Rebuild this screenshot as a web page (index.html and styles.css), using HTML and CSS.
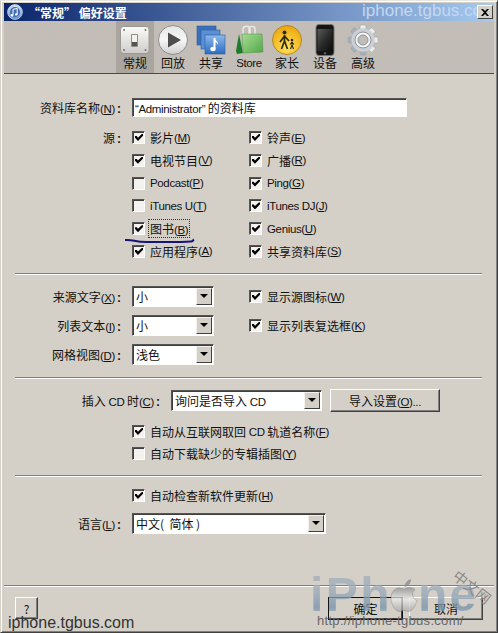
FILE: index.html
```html
<!DOCTYPE html>
<html lang="zh-CN">
  <head>
    <meta charset="UTF-8" />
    <title>“常规” 偏好设置</title>
    <link rel="stylesheet" href="styles.css">
  </head>
  <body>
    <div class="window">
      <header class="titlebar">
        <svg class="titlebar__icon" width="16" height="16" viewBox="0 0 16 16">
          <defs>
            <linearGradient id="disc" x1="0" y1="0" x2="0" y2="1">
              <stop offset="0" stop-color="#d8e4f4" />
              <stop offset="1" stop-color="#5f8fd0" />
            </linearGradient>
          </defs>
          <circle cx="8" cy="8" r="7.4" fill="url(#disc)" stroke="#c8d4e4" stroke-width="0.8" />
          <circle cx="8" cy="8" r="5" fill="#3f6cb4" />
          <path d="M6 5.4l4.2-1v6" fill="none" stroke="#fff" stroke-width="1" />
          <path d="M6 5.4v5.8" fill="none" stroke="#fff" stroke-width="1" />
          <circle cx="5" cy="11.2" r="1.2" fill="#fff" />
          <circle cx="9.2" cy="10.4" r="1.2" fill="#fff" />
        </svg>
        <h1 class="titlebar__text">“常规” 偏好设置</h1>
        <span class="titlebar__mark">iphone.tgbus.com</span>
        <button class="titlebar__close" type="button" aria-label="关闭">
          <svg width="8" height="7" viewBox="0 0 8 7">
            <path d="M0 0h2l2 2 2-2h2L5 3.500l3 3.500H6L4 5 2 7H0l3-3.500z" fill="#000" />
          </svg>
        </button>
      </header>

      <nav class="toolbar">
        <a class="tool tool--active">
          <svg width="30" height="30" viewBox="0 0 30 30">
            <defs>
              <linearGradient id="tile" x1="0" y1="0" x2="0" y2="1">
                <stop offset="0" stop-color="#fbfbfa" />
                <stop offset="1" stop-color="#cfcdc9" />
              </linearGradient>
            </defs>
            <rect x="0.500" y="1.500" width="28.500" height="27" rx="3" fill="url(#tile)" stroke="#9a9893" />
            <rect x="11" y="9" width="7" height="13" rx="1" fill="#8f8c87" />
            <rect x="12" y="10" width="5" height="7" fill="#f2f1ee" />
            <rect x="12" y="17" width="5" height="4" fill="#55534f" />
            <g fill="#77756f">
              <circle cx="4" cy="5" r="1" />
              <circle cx="25.500" cy="5" r="1" />
              <circle cx="4" cy="25" r="1" />
              <circle cx="25.500" cy="25" r="1" />
            </g>
          </svg>
          <span>常规</span>
        </a>
        <a class="tool">
          <svg width="30" height="30" viewBox="0 0 30 30">
            <defs>
              <linearGradient id="play" x1="0" y1="0" x2="0" y2="1">
                <stop offset="0" stop-color="#e6e6e6" />
                <stop offset="0.500" stop-color="#f6f6f6" />
                <stop offset="1" stop-color="#cfcfcf" />
              </linearGradient>
            </defs>
            <circle cx="15" cy="15" r="14.500" fill="url(#play)" stroke="#8d8b88" />
            <path d="M10 7.500L23 15l-13 7.500z" fill="#4d4d4d" />
          </svg>
          <span>回放</span>
        </a>
        <a class="tool">
          <svg width="30" height="30" viewBox="0 0 30 30">
            <defs>
              <linearGradient id="sheet" x1="0" y1="0" x2="0" y2="1">
                <stop offset="0" stop-color="#8db8ec" />
                <stop offset="1" stop-color="#2a6cc4" />
              </linearGradient>
            </defs>
            <rect x="1" y="1" width="19" height="19" fill="#3a70bb" stroke="#2f5a98" stroke-width="0.600" />
            <rect x="5" y="5" width="19" height="19" fill="#5b8fd6" stroke="#2f5a98" stroke-width="0.600" />
            <rect x="9" y="10" width="20" height="19" fill="url(#sheet)" stroke="#2a5c9e" stroke-width="0.600" />
            <path d="M18.500 13v10.500" stroke="#fff" stroke-width="2" />
            <path d="M18.500 13c1 3 4 3 3.500 7-.6-2-2-3-3.500-3z" fill="#fff" />
            <ellipse cx="17" cy="24" rx="2.700" ry="2.200" fill="#fff" />
          </svg>
          <span>共享</span>
        </a>
        <a class="tool">
          <svg width="30" height="30" viewBox="0 0 30 30">
            <defs>
              <linearGradient id="bag" x1="0" y1="0" x2="1" y2="1">
                <stop offset="0" stop-color="#a6dc92" />
                <stop offset="1" stop-color="#52a848" />
              </linearGradient>
            </defs>
            <path d="M9 10V5c0-5 7-5 7 0v4M15 9V4c0-3.500 6-3.500 6 0v6" fill="none" stroke="#ecece6" stroke-width="1.400" />
            <path d="M5 9l4 19-6 1-1-3z" fill="#1f7a2c" />
            <path d="M8 9h20l1 18-20 1z" fill="url(#bag)" stroke="#4c8e44" stroke-width="0.500" />
          </svg>
          <span class="lat">Store</span>
        </a>
        <a class="tool">
          <svg width="30" height="30" viewBox="0 0 30 30">
            <defs>
              <radialGradient id="parent" cx="0.500" cy="0.750" r="0.700">
                <stop offset="0" stop-color="#ffe25a" />
                <stop offset="1" stop-color="#eda810" />
              </radialGradient>
            </defs>
            <circle cx="15" cy="15" r="14.500" fill="url(#parent)" stroke="#a67c1a" stroke-width="0.800" />
            <circle cx="12.500" cy="7.500" r="2" fill="#2f2a12" />
            <path d="M12.500 10v7M12.500 11L8 17M12.500 11l4.500 5M12.500 16l-3 8M12.500 16l3 8" stroke="#2f2a12" stroke-width="1.700" fill="none" />
            <circle cx="20" cy="15" r="1.300" fill="#2f2a12" />
            <path d="M20 16.500v4M20 17l-2 2.500M20 17l2 2.500M20 20l-1.500 4M20 20l1.500 4" stroke="#2f2a12" stroke-width="1.100" fill="none" />
          </svg>
          <span>家长</span>
        </a>
        <a class="tool">
          <svg width="30" height="32" viewBox="0 0 30 32">
            <defs>
              <linearGradient id="screen" x1="0" y1="0" x2="1" y2="1">
                <stop offset="0" stop-color="#5a5a5a" />
                <stop offset="0.500" stop-color="#2b2b2b" />
                <stop offset="1" stop-color="#0c0c0c" />
              </linearGradient>
            </defs>
            <rect x="6" y="0.500" width="18" height="31" rx="3" fill="#141414" stroke="#77756f" />
            <rect x="7.500" y="5" width="15" height="22" fill="url(#screen)" />
            <circle cx="15" cy="29.200" r="1.200" fill="#5a5a5a" />
          </svg>
          <span>设备</span>
        </a>
        <a class="tool">
          <svg width="30" height="30" viewBox="0 0 30 30">
            <defs>
              <linearGradient id="gear" x1="0" y1="0" x2="0" y2="1">
                <stop offset="0" stop-color="#eef0f3" />
                <stop offset="1" stop-color="#a4abb5" />
              </linearGradient>
            </defs>
            <g fill="url(#gear)" stroke="#969ba3" stroke-width="0.500">
              <rect x="12" y="0" width="6" height="30" rx="1.500" />
              <rect x="12" y="0" width="6" height="30" rx="1.500" transform="rotate(45 15 15)" />
              <rect x="12" y="0" width="6" height="30" rx="1.500" transform="rotate(90 15 15)" />
              <rect x="12" y="0" width="6" height="30" rx="1.500" transform="rotate(135 15 15)" />
            </g>
            <circle cx="15" cy="15" r="11.500" fill="#ccd0d6" />
            <circle cx="15" cy="15" r="8" fill="#f3f4f5" stroke="#8f949c" />
            <circle cx="15" cy="15" r="5" fill="#c2beb7" stroke="#8f949c" />
          </svg>
          <span>高级</span>
        </a>
      </nav>

      <main class="panel">
        <section class="group group--library">
          <div class="row row--name">
            <label class="row__label">资料库名称<span class="lat">(<u>N</u>)</span><b class="colon">:</b></label>
            <div class="text-input"><span class="lat">“Administrator”</span> 的资料库</div>
          </div>

          <div class="sources">
            <span class="row__label sources__label">源<b class="colon">:</b></span>
            <div class="sources__grid">
              <label class="check-label"><input class="check" type="checkbox" checked />影片<span class="lat">(<u>M</u>)</span></label>
              <label class="check-label"><input class="check" type="checkbox" checked />铃声<span class="lat">(<u>E</u>)</span></label>
              <label class="check-label"><input class="check" type="checkbox" checked />电视节目<span class="lat">(<u>V</u>)</span></label>
              <label class="check-label"><input class="check" type="checkbox" checked />广播<span class="lat">(<u>R</u>)</span></label>
              <label class="check-label"><input class="check" type="checkbox" /><span class="lat">Podcast(<u>P</u>)</span></label>
              <label class="check-label"><input class="check" type="checkbox" checked /><span class="lat">Ping(<u>G</u>)</span></label>
              <label class="check-label"><input class="check" type="checkbox" /><span class="lat">iTunes U(<u>T</u>)</span></label>
              <label class="check-label"><input class="check" type="checkbox" checked /><span class="lat">iTunes DJ(<u>J</u>)</span></label>
              <label class="check-label"><input class="check" type="checkbox" checked /><span class="focus">图书<span class="lat">(<u>B</u>)</span></span></label>
              <label class="check-label"><input class="check" type="checkbox" checked /><span class="lat">Genius(<u>U</u>)</span></label>
              <label class="check-label"><input class="check" type="checkbox" checked />应用程序<span class="lat">(<u>A</u>)</span></label>
              <label class="check-label"><input class="check" type="checkbox" checked />共享资料库<span class="lat">(<u>S</u>)</span></label>
            </div>
          </div>
        </section>

        <section class="group group--lists">
          <div class="row row--list">
            <label class="row__label">来源文字<span class="lat">(<u>X</u>)</span><b class="colon">:</b></label>
            <div class="combo combo--short"><span class="combo__value">小</span><span class="combo__arrow"></span></div>
            <label class="check-label check-label--side"><input class="check" type="checkbox" checked />显示源图标<span class="lat">(<u>W</u>)</span></label>
          </div>
          <div class="row row--list">
            <label class="row__label">列表文本<span class="lat">(<u>I</u>)</span><b class="colon">:</b></label>
            <div class="combo combo--short"><span class="combo__value">小</span><span class="combo__arrow"></span></div>
            <label class="check-label check-label--side"><input class="check" type="checkbox" checked />显示列表复选框<span class="lat">(<u>K</u>)</span></label>
          </div>
          <div class="row row--list">
            <label class="row__label">网格视图<span class="lat">(<u>D</u>)</span><b class="colon">:</b></label>
            <div class="combo combo--short"><span class="combo__value">浅色</span><span class="combo__arrow"></span></div>
          </div>
        </section>

        <section class="group group--cd">
          <div class="row row--cd">
            <label class="row__label row__label--cd">插入 <span class="lat">CD</span> 时<span class="lat">(<u>C</u>)</span><b class="colon">:</b></label>
            <div class="combo combo--cd"><span class="combo__value">询问是否导入 <span class="lat">CD</span></span><span class="combo__arrow"></span></div>
            <button class="btn btn--import" type="button">导入设置<span class="lat">(<u>O</u>)...</span></button>
          </div>
          <div class="group__checks">
            <label class="check-label"><input class="check" type="checkbox" checked />自动从互联网取回 <span class="lat">CD</span> 轨道名称<span class="lat">(<u>F</u>)</span></label>
            <label class="check-label"><input class="check" type="checkbox" />自动下载缺少的专辑插图<span class="lat">(<u>Y</u>)</span></label>
          </div>
        </section>

        <section class="group group--last">
          <div class="group__checks">
            <label class="check-label"><input class="check" type="checkbox" checked />自动检查新软件更新<span class="lat">(<u>H</u>)</span></label>
          </div>
          <div class="row row--language">
            <label class="row__label">语言<span class="lat">(<u>L</u>)</span><b class="colon">:</b></label>
            <div class="combo combo--language"><span class="combo__value">中文(  简体 )</span><span class="combo__arrow"></span></div>
          </div>
        </section>
      </main>

      <footer class="footer">
        <button class="btn btn--help" type="button">?</button>
        <div class="footer__actions">
          <button class="btn btn--default" type="button">确定</button>
          <button class="btn btn--cancel" type="button">取消</button>
        </div>
      </footer>

      <!-- pen mark under the books option -->
      <svg class="pen-mark" width="76" height="8" viewBox="0 0 76 8">
        <path d="M1 4c10-.5 8 2 22 2s30 .5 44-.5c2 0 2-1.500 3-2" fill="none" stroke="#14147a" stroke-width="2" />
      </svg>

      <span class="mark-left">iphone.tgbus.com</span>

      <div class="logo">
        <div class="logo__word">
          <span class="logo__text">iPh</span>
          <svg class="logo__apple" width="29" height="36" viewBox="0 0 29 36">
            <defs>
              <linearGradient id="apple" x1="0" y1="0" x2="0" y2="1">
                <stop offset="0" stop-color="#8c8c8c" />
                <stop offset="0.500" stop-color="#ebebeb" />
                <stop offset="1" stop-color="#a8a8a8" />
              </linearGradient>
            </defs>
            <path d="M14.500 11C17 9 21 8.500 25 11.500c-4 3-3 9 2 11-2 6-5 11-8.500 11-2 0-2.500-1-4.500-1s-2.500 1-4.500 1C5 33.500 1 26 1 20c0-7 5-10.500 9-10 2 .2 3 1 4.500 1z" fill="url(#apple)" stroke="#777" stroke-width="0.500" />
            <path d="M14.500 9c0-4 3-7 6.500-8 .3 4-3 7.500-6.500 8z" fill="#8a8a8a" />
          </svg>
          <span class="logo__text">ne</span>
        </div>
        <span class="logo__url">http://iphone-tgbus.com/</span>
        <span class="logo__cn">中文网</span>
      </div>
    </div>
  </body>
</html>
```

FILE: styles.css
```css
html,
body {
  margin: 0;
  width: 498px;
  height: 633px;
  overflow: hidden;
  background-color: #d4d0c8;
  font-family: 'Noto Sans CJK SC', 'Liberation Sans', sans-serif;
  font-size: 12px;
  color: #111;
}

u {
  text-underline-offset: 1px;
}

/* latin runs are narrower than the default metrics */
.lat {
  font-family: 'Liberation Sans', sans-serif;
  font-size: 11.500px;
  letter-spacing: -0.350px;
}

.colon {
  margin-left: 2px;
  margin-right: 1px;
  font-family: 'Liberation Sans', sans-serif;
}

.window {
  position: relative;
  box-sizing: border-box;
  width: 498px;
  height: 633px;
  padding: 3px;
  display: flex;
  flex-direction: column;
  background-color: #d4d0c8;
  border-top: 1px solid #e8e6e0;
  border-left: 1px solid #d4d0c8;
  border-right: 1px solid #404040;
  border-bottom: 1px solid #404040;
  box-shadow: inset 1px 1px 0 #fff, inset -1px -1px 0 #808080;
  overflow: hidden;
}

/* title bar */
.titlebar {
  position: relative;
  flex: none;
  height: 18px;
  margin-top: -1px;
  display: flex;
  align-items: center;
  padding-left: 3px;
  background: linear-gradient(to right, #0a246a, #a6caf0);
  overflow: hidden;
}

.titlebar__icon {
  flex: none;
  margin-right: 5px;
}

.titlebar__text {
  margin: 0;
  font-size: 12px;
  font-weight: 700;
  color: #fff;
  white-space: nowrap;
}

.titlebar__mark {
  position: absolute;
  left: 358px;
  top: -2px;
  font-family: 'Liberation Sans', sans-serif;
  font-size: 17px;
  line-height: 20px;
  color: #c4d8f0;
  white-space: nowrap;
}

.titlebar__close {
  position: absolute;
  right: 1px;
  top: 2px;
  box-sizing: border-box;
  width: 16px;
  height: 14px;
  padding: 0;
  display: flex;
  align-items: center;
  justify-content: center;
  background: #d4d0c8;
  border: 1px solid;
  border-color: #fff #404040 #404040 #fff;
}

/* toolbar */
.toolbar {
  flex: none;
  height: 52px;
  display: flex;
  justify-content: center;
  background-color: #c2beb7;
  border-bottom: 1px solid #4a4a46;
}

.tool {
  width: 38px;
  height: 52px;
  box-sizing: border-box;
  padding-top: 3px;
  display: flex;
  flex-direction: column;
  align-items: center;
  font-size: 12px;
  line-height: 14px;
}

.tool svg {
  flex: none;
  height: 32px;
  overflow: visible;
}

.tool--active {
  background-color: #aaa69f;
}

/* panel */
.panel {
  flex: 1;
  padding: 0 12px 0 11px;
}

.group {
  border-bottom: 1px solid #808080;
  box-shadow: 0 1px 0 #fff;
}

.group--library {
  height: 200px;
  padding-top: 24px;
  box-sizing: border-box;
}

.group--lists {
  height: 104px;
  padding-top: 12px;
  box-sizing: border-box;
}

.group--cd {
  height: 98px;
  padding-top: 11px;
  box-sizing: border-box;
}

.group--last {
  border: 0;
  box-shadow: none;
  padding-top: 11px;
}

.row {
  display: flex;
  align-items: center;
}

.row__label {
  flex: none;
  width: 107px;
  margin-right: 10px;
  text-align: right;
  white-space: nowrap;
}

.row--name {
  height: 19px;
}

.row--list {
  height: 21px;
  margin-bottom: 8px;
}

.row--cd {
  height: 23px;
}

.row--language {
  height: 21px;
  margin-top: 9px;
}

.row__label--cd {
  width: 146px;
}

.text-input {
  box-sizing: border-box;
  width: 275px;
  height: 19px;
  padding: 0 2px;
  line-height: 17px;
  background: #fff;
  border: 1px solid;
  border-color: #555 #fff #fff #555;
  box-shadow: inset 1px 1px 0 #404040;
}

.sources {
  display: flex;
  margin-top: 12px;
}

.sources__label {
  line-height: 17px;
}

.sources__grid {
  display: grid;
  grid-template-columns: 117px 1fr;
  grid-auto-rows: 22.800px;
}

.check-label {
  display: flex;
  align-items: center;
  white-space: pre;
  height: 17px;
}

.check-label--side {
  margin-left: 35px;
}

.check {
  appearance: none;
  position: relative;
  flex: none;
  box-sizing: border-box;
  width: 13px;
  height: 13px;
  margin: 0 5px 0 0;
  background: #f4f2ee;
  border: 1px solid;
  border-color: #555 #fff #fff #555;
  box-shadow: inset 1px 1px 0 #404040;
}

.check:checked::after {
  content: '';
  position: absolute;
  left: 2px;
  top: 2px;
  width: 8px;
  height: 7px;
  background: #000;
  clip-path: polygon(0 30%, 22% 30%, 37% 52%, 85% 0, 100% 0, 100% 25%, 37% 100%, 0 55%);
}

.focus {
  margin-left: -1px;
  padding: 0 1px;
  outline: 1px dotted #333;
}

.combo {
  flex: none;
  box-sizing: border-box;
  height: 21px;
  display: flex;
  align-items: center;
  background: #fff;
  border: 1px solid;
  border-color: #555 #fff #fff #555;
  box-shadow: inset 1px 1px 0 #404040;
}

.combo__value {
  flex: 1;
  padding-left: 3px;
  white-space: pre;
}

.combo__arrow {
  position: relative;
  flex: none;
  box-sizing: border-box;
  width: 16px;
  height: 17px;
  margin-right: 1px;
  background: #d4d0c8;
  border: 1px solid;
  border-color: #f4f2ee #404040 #404040 #f4f2ee;
}

.combo__arrow::after {
  content: '';
  position: absolute;
  left: 3px;
  top: 5px;
  border-top: 4px solid #000;
  border-left: 4px solid transparent;
  border-right: 4px solid transparent;
}

.combo--short {
  width: 82px;
}

.combo--cd {
  width: 151px;
}

.combo--language {
  width: 194px;
}

.btn {
  box-sizing: border-box;
  padding: 0;
  font: inherit;
  color: #111;
  background: #d4d0c8;
  border: 1px solid;
  border-color: #fff #404040 #404040 #fff;
  box-shadow: inset -1px -1px 0 #808080;
}

.btn--import {
  width: 110px;
  height: 23px;
  margin-left: 8px;
}

.group__checks {
  margin-top: 11px;
  padding-left: 117px;
  display: flex;
  flex-direction: column;
  gap: 5px;
}

.group--last .group__checks {
  margin-top: 0;
}

/* footer */
.footer {
  flex: none;
  height: 44px;
  box-sizing: border-box;
  padding: 11px 11px 0;
  display: flex;
  justify-content: space-between;
  align-items: flex-start;
  border-top: 1px solid #808080;
  box-shadow: inset 0 1px 0 #fff;
}

.footer__actions {
  display: flex;
  gap: 6px;
}

.btn--help {
  width: 23px;
  height: 22px;
}

.btn--default {
  width: 75px;
  height: 23px;
  border-color: #111;
  box-shadow: inset -1px -1px 0 #404040;
}

.btn--cancel {
  width: 74px;
  height: 23px;
}

/* overlays */
.pen-mark {
  position: absolute;
  left: 123px;
  top: 235px;
}

.mark-left {
  position: absolute;
  left: 7px;
  top: 612px;
  font-family: 'Liberation Sans', sans-serif;
  font-size: 16px;
  line-height: 19px;
  color: #333;
  white-space: nowrap;
}

.logo {
  position: absolute;
  left: 309px;
  top: 566px;
  width: 188px;
  height: 66px;
  pointer-events: none;
}

.logo__word {
  position: absolute;
  left: 0;
  top: 3px;
  display: flex;
  align-items: flex-end;
  opacity: 0.750;
}

.logo__text {
  font-family: 'Liberation Sans', sans-serif;
  font-size: 48px;
  line-height: 50px;
  font-weight: 700;
  letter-spacing: 2.400px;
  color: transparent;
  background: linear-gradient(to bottom, #a8b0b8 0, #97a9b8 45%, #7490aa 75%, #bcc6ce 100%);
  -webkit-background-clip: text;
  background-clip: text;
}

.logo__apple {
  margin: 0 -1px 6px -2px;
}

.logo__url {
  position: absolute;
  left: 7px;
  top: 46px;
  font-family: 'Liberation Sans', sans-serif;
  font-size: 13px;
  line-height: 15px;
  letter-spacing: 0.300px;
  color: #666;
  white-space: nowrap;
}

.logo__cn {
  position: absolute;
  left: 150px;
  top: 0;
  font-size: 14.500px;
  line-height: 15px;
  color: #8a8a8a;
  white-space: nowrap;
  transform: rotate(38deg);
  transform-origin: 0 0;
}
```
